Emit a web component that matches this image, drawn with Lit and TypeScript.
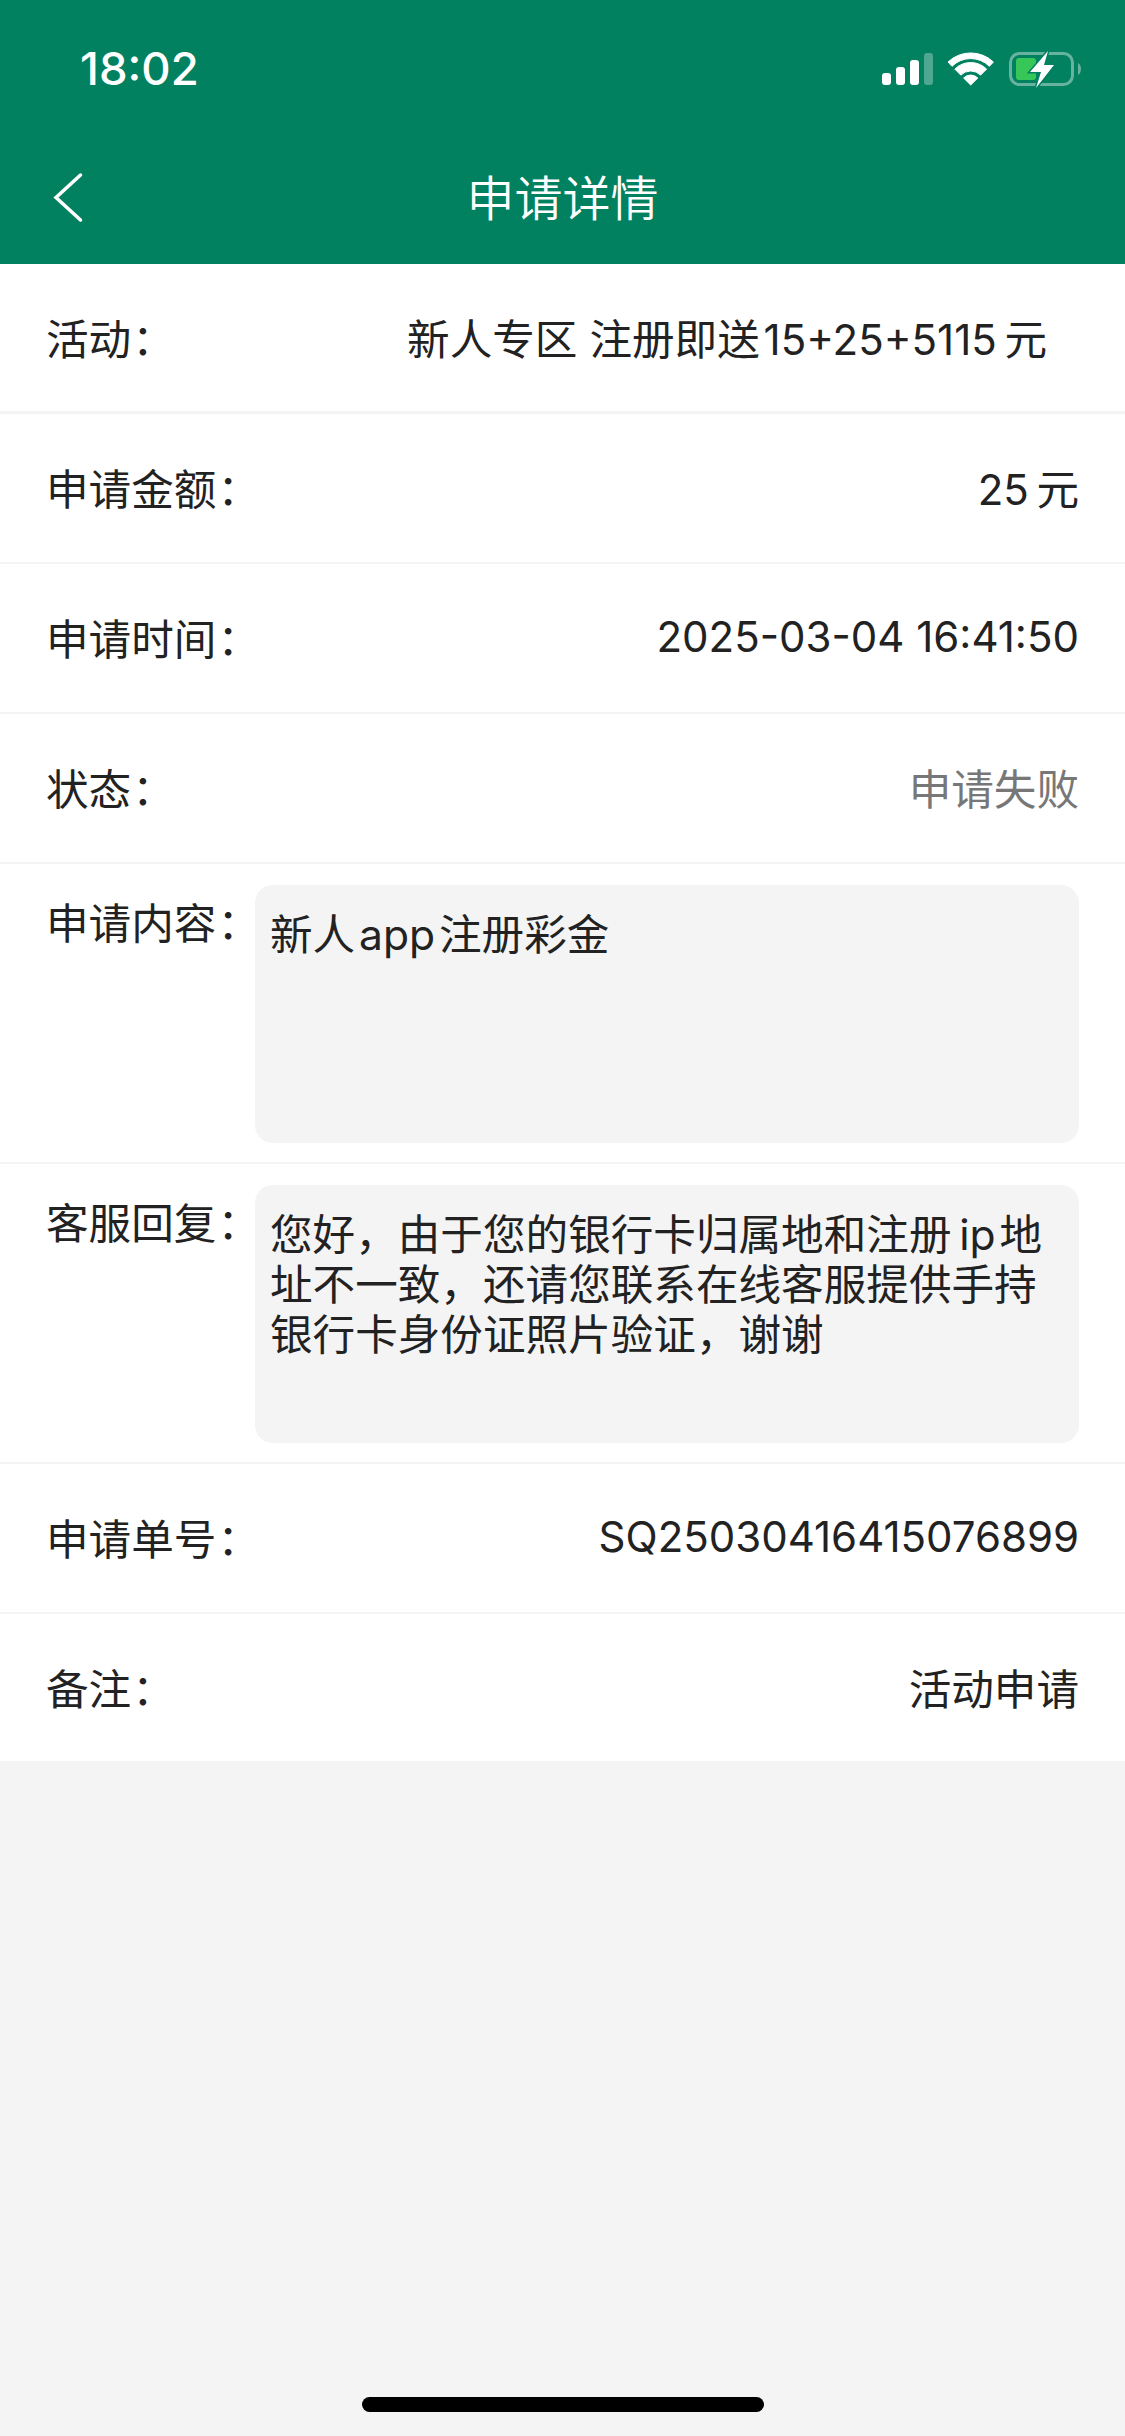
import { LitElement, html, css } from "lit";
import { customElement } from "lit/decorators.js";

const label = (text: string) => html`<span class="label">${text}<span class="colon">：</span></span>`;

@customElement("app-root")
export class AppRoot extends LitElement {
  static styles = css`
    :host { display: block; width: 1125px; height: 2436px; background: #f4f4f4; font-family: "Inter", "Noto Sans CJK SC", sans-serif; position: relative; overflow: hidden; color: #222; }
    .top { background: #028161; height: 264px; display: flex; flex-direction: column; color: #fff; }
    .status { height: 132px; display: flex; justify-content: space-between; padding: 0 43px 0 80px; box-sizing: border-box; align-items: flex-start; }
    .time { font-size: 45.500px; font-weight: 500; line-height: 54px; margin-top: 42px; }
    .status svg { margin-top: 50px; display: block; }
    .nav { height: 132px; position: relative; display: flex; align-items: center; justify-content: center; }
    .nav svg { position: absolute; left: 50px; top: 40px; }
    .title { font-size: 48px; line-height: 66px; font-weight: 350; font-family: "Noto Sans CJK SC", sans-serif; margin-top: -6px; }
    .list { background: #fff; }
    .row { display: flex; justify-content: space-between; align-items: center; height: 150px; border-bottom: 2px solid #f4f4f4; box-sizing: border-box; padding: 0 46px 3px; font-size: 42.600px; font-weight: 400; white-space: nowrap; }
    .row.edge { border-bottom-width: 3px; }
    .row.first .value { margin-right: 32px; }
    .label { display: block; }
    .colon { margin-left: 1px; }
    .muted { color: #777; }
    .num { font-size: 42px; }
    .row.tall { height: 300px; align-items: flex-start; justify-content: flex-start; padding: 21px 46px 0; }
    .tall .label { width: 209px; flex: none; margin-top: 9px; line-height: 60px; }
    .box { width: 825px; height: 258px; background: #f4f4f4; border-radius: 18px; padding: 25px 15px; box-sizing: border-box; line-height: 50px; white-space: normal; }
    .home { position: absolute; left: 362px; top: 2397px; width: 402px; height: 15px; border-radius: 8px; background: #000; }
  `;

  render() {
    return html`
      <div class="top">
        <div class="status">
          <div class="time">18:02</div>
          <svg width="200" height="40" viewBox="0 0 200 40">
            <rect x="0" y="23" width="9" height="12" rx="3" fill="#fff"/>
            <rect x="14" y="17" width="9" height="18" rx="3" fill="#fff"/>
            <rect x="28" y="10" width="9" height="25" rx="3" fill="#fff"/>
            <rect x="42" y="3" width="9" height="32" rx="3" fill="#fff" opacity=".3"/>
            <g fill="#fff" stroke="#fff" stroke-width="1" stroke-linejoin="round">
              <path d="M66 12 A33 33 0 0 1 111.400 12 L107.400 16.300 A26.500 26.500 0 0 0 70 16.300 Z"/>
              <path d="M72.800 19.100 A22.500 22.500 0 0 1 104.600 19.100 L98.600 25.100 A14 14 0 0 0 78.800 25.100 Z"/>
              <path d="M81.600 28 A10 10 0 0 1 95.800 28 L88.700 35 Z"/>
            </g>
            <rect x="128.500" y="3.500" width="62" height="31" rx="9" fill="none" stroke="#fff" stroke-opacity=".4" stroke-width="3"/>
            <path d="M196 13 C200 15 200 23 196 25 Z" fill="#fff" opacity=".4"/>
            <rect x="134" y="8" width="20" height="22" rx="3" fill="#37c759"/>
            <path d="M166 1 L148 22 L159 22 L154 38 L172 15 L162 15 Z" fill="#fff" stroke="#028161" stroke-width="3" paint-order="stroke"/>
          </svg>
        </div>
        <div class="nav">
          <svg width="34" height="52" viewBox="0 0 34 52"><path d="M30.500 3 L6 25.500 L30.500 48" fill="none" stroke="#fff" stroke-width="3.500" stroke-linecap="round"/></svg>
          <div class="title">申请详情</div>
        </div>
      </div>
      <div class="list">
        <div class="row first edge">${label("活动")}<span class="value">新人专区 注册即送<span class="num">\u200a15+25+5115\u2009</span>元</span></div>
        <div class="row">${label("申请金额")}<span><span class="num">25\u2009</span>元</span></div>
        <div class="row">${label("申请时间")}<span class="num">2025-03-04 16:41:50</span></div>
        <div class="row">${label("状态")}<span class="muted">申请失败</span></div>
        <div class="row tall">${label("申请内容")}<div class="box">新人\u200aapp\u200a注册彩金</div></div>
        <div class="row tall">${label("客服回复")}<div class="box">您好，由于您的银行卡归属地和注册\u2009ip\u200a地址不一致，还请您联系在线客服提供手持银行卡身份证照片验证，谢谢</div></div>
        <div class="row">${label("申请单号")}<span class="num">SQ25030416415076899</span></div>
        <div class="row edge">${label("备注")}<span>活动申请</span></div>
      </div>
      <div class="home"></div>
    `;
  }
}
